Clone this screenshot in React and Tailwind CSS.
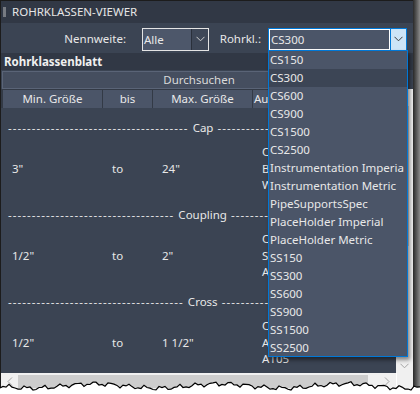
import { useState } from "react";

const pipeClasses = [
  "CS150",
  "CS300",
  "CS600",
  "CS900",
  "CS1500",
  "CS2500",
  "Instrumentation Imperia",
  "Instrumentation Metric",
  "PipeSupportsSpec",
  "PlaceHolder Imperial",
  "PlaceHolder Metric",
  "SS150",
  "SS300",
  "SS600",
  "SS900",
  "SS1500",
  "SS2500",
];

const groups = [
  {
    label: "Cap",
    before: 38,
    min: '3"',
    max: '24"',
    info: ["CS300 Cap", "BW", "WPB"],
  },
  {
    label: "Coupling",
    before: 35,
    min: '1/2"',
    max: '2"',
    info: ["Coupling", "SW", "A105"],
  },
  {
    label: "Cross",
    before: 37,
    min: '1/2"',
    max: '1 1/2"',
    info: ["Cross", "A105", "A105"],
  },
];

function Chevron({ className }) {
  return (
    <svg width="9" height="6" viewBox="0 0 9 6" className={className}>
      <path d="M0.5 0.8 L4.5 4.8 L8.5 0.8" fill="none" stroke="currentColor" strokeWidth="1" />
    </svg>
  );
}

function TornEdge() {
  // jagged bottom edge of the screenshot
  const pts = [];
  for (let x = 0; x <= 420; x += 3) {
    const y =
      6 +
      2.2 * Math.sin(x * 0.05) +
      1.6 * Math.sin(x * 0.37 + 1.3) +
      1.1 * Math.sin(x * 1.21 + 0.4);
    pts.push(`${x},${y.toFixed(1)}`);
  }
  const line = pts.join(" ");
  return (
    <svg width="420" height="14" viewBox="0 0 420 14" className="absolute left-0 bottom-0">
      <polygon points={`0,14 ${line} 420,14`} fill="#ffffff" />
      <polyline points={line} fill="none" stroke="#000000" strokeWidth="1.2" />
    </svg>
  );
}

function App() {
  const [selected, setSelected] = useState("CS300");

  return (
    <div className="relative w-[420px] h-[394px] overflow-hidden bg-white flex font-['Noto_Sans',sans-serif] text-[11.5px] text-[#e8e8e8]">
      {/* Window */}
      <div className="w-[413px] h-full flex flex-col border-l border-t border-[#1c1c1c] bg-[#3b4453]">
        {/* Title bar */}
        <div className="h-[22px] bg-[#313845] flex items-center">
          <div className="ml-[2px] w-[3px] h-[10px] bg-[radial-gradient(circle,#c8c8c8_0.6px,transparent_0.8px)] bg-[length:2px_2px]" />
          <span className="ml-[6px] text-[11.5px] leading-none text-[#e6e6e6]">ROHRKLASSEN-VIEWER</span>
        </div>

        {/* Filter row */}
        <div className="h-[30px] flex items-center pt-[2px]">
          <div className="w-[125px] text-right">Nennweite:</div>
          <div className="ml-[16px] w-[67px] h-[23px] flex border border-[#e4e4e4]">
            <div className="flex-1 bg-[#4d576a] border-r border-[#2a303b] pl-[1px] leading-[21px]">Alle</div>
            <div className="w-[16px] flex items-center justify-center bg-[#3e4757] text-[#cfcfcf]">
              <Chevron />
            </div>
          </div>
          <div className="w-[52px] text-right">Rohrkl.:</div>
          <div className="ml-[7px] w-[139px] h-[23px] flex border border-[#0078d7]">
            <div className="flex-1 bg-[#4b5568] border border-white pl-[1px] leading-[19px]">{selected}</div>
            <div className="w-[16px] flex items-center justify-center bg-[#cce4f7] border-l border-[#0078d7] text-[#3c3c3c]">
              <Chevron />
            </div>
          </div>
        </div>

        {/* Section */}
        <div className="h-[17px] bg-[#313845] pl-[3px] font-bold leading-[17px] text-[#f0f0f0]">
          Rohrklassenblatt
        </div>

        <div className="flex-1 flex flex-col mt-[1px]">
          <div className="flex flex-1">
            {/* Table area */}
            <div className="w-[395px] flex flex-col">
              <div className="ml-[1px] h-[18px] bg-[#454e5f] border border-[#5a6477] text-center leading-[16px] text-[#dadada]">
                Durchsuchen
              </div>
              <div className="h-[284px] overflow-hidden">
                <div className="flex h-[19px] pl-[2px] bg-[#333a46] gap-[1px] pt-[1px]">
                  <div className="w-[99px] bg-[#4b5568] text-center leading-[18px]">Min. Größe</div>
                  <div className="w-[49px] bg-[#4b5568] text-center leading-[18px]">bis</div>
                  <div className="w-[99px] bg-[#4b5568] text-center leading-[18px]">Max. Größe</div>
                  <div className="w-[66px] bg-[#4b5568] text-center leading-[18px]">Ausführung</div>
                  <div className="flex-1 bg-[#4b5568] text-center leading-[18px]">Norm</div>
                </div>
                <div className="pt-[2px] pl-[2px]">
                  {groups.map((g) => (
                    <div key={g.label}>
                      <div className="h-[36px] flex items-center pl-[5px] whitespace-nowrap overflow-hidden">
                        <span className="tracking-[1.05px]">{"-".repeat(g.before)}</span>
                        <span className="ml-[4px] mr-[4px]">{g.label}</span>
                        <span className="tracking-[1.05px]">{"-".repeat(30)}</span>
                      </div>
                      <div className="h-[51px] flex items-center pb-[5px]">
                        <div className="w-[100px] pl-[9px]">{g.min}</div>
                        <div className="w-[50px] pl-[9px]">to</div>
                        <div className="w-[100px] pl-[9px]">{g.max}</div>
                        <div className="flex-1 pl-[9px] leading-[16.5px] whitespace-nowrap">
                          {g.info.map((line, i) => (
                            <div key={i}>{line}</div>
                          ))}
                        </div>
                      </div>
                    </div>
                  ))}
                </div>
              </div>
            </div>

            {/* Vertical scrollbar */}
            <div className="w-[17px] flex flex-col">
              <div className="h-[18px]" />
              <div className="h-[284px] bg-[#f0f0f0] flex flex-col items-center">
                <div className="h-[17px]" />
                <div className="w-[9px] h-[140px] bg-[#cdcdcd]" />
                <div className="flex-1" />
                <div className="h-[14px] flex items-center justify-center text-[#a3a3a3]">
                  <Chevron />
                </div>
              </div>
            </div>
          </div>

          {/* Horizontal scrollbar */}
          <div className="h-[17px] flex bg-[#f0f0f0] mb-[4px]">
            <div className="w-[17px] flex items-center justify-center text-[#a3a3a3]">
              <svg width="6" height="9" viewBox="0 0 6 9">
                <path d="M5 0.5 L1 4.5 L5 8.5" fill="none" stroke="currentColor" strokeWidth="1" />
              </svg>
            </div>
            <div className="w-[350px] my-[2px] bg-[#cdcdcd]" />
            <div className="flex-1 flex items-center justify-end pr-[6px] text-[#a3a3a3]">
              <svg width="6" height="9" viewBox="0 0 6 9">
                <path d="M1 0.5 L5 4.5 L1 8.5" fill="none" stroke="currentColor" strokeWidth="1" />
              </svg>
            </div>
            <div className="w-[17px] border-l border-white bg-[#f0f0f0]" />
          </div>
        </div>
      </div>

      {/* Window shadow */}
      <div className="flex-1 bg-gradient-to-r from-[#2a2a2a] to-[#8a8a8a]" />

      {/* Open dropdown list */}
      <div className="absolute left-[268px] top-[50px] w-[140px] h-[307px] bg-[#4b5568] border border-[#0078d7] shadow-[2px_3px_4px_rgba(0,0,0,0.45)]">
        {pipeClasses.map((name) => (
          <div
            key={name}
            onClick={() => setSelected(name)}
            className={`h-[18px] pl-[1px] leading-[18px] whitespace-nowrap overflow-hidden text-[11.5px] ${
              name === selected ? "bg-[#3c4555]" : ""
            }`}
          >
            {name}
          </div>
        ))}
      </div>

      <TornEdge />
    </div>
  );
}

export default App;
